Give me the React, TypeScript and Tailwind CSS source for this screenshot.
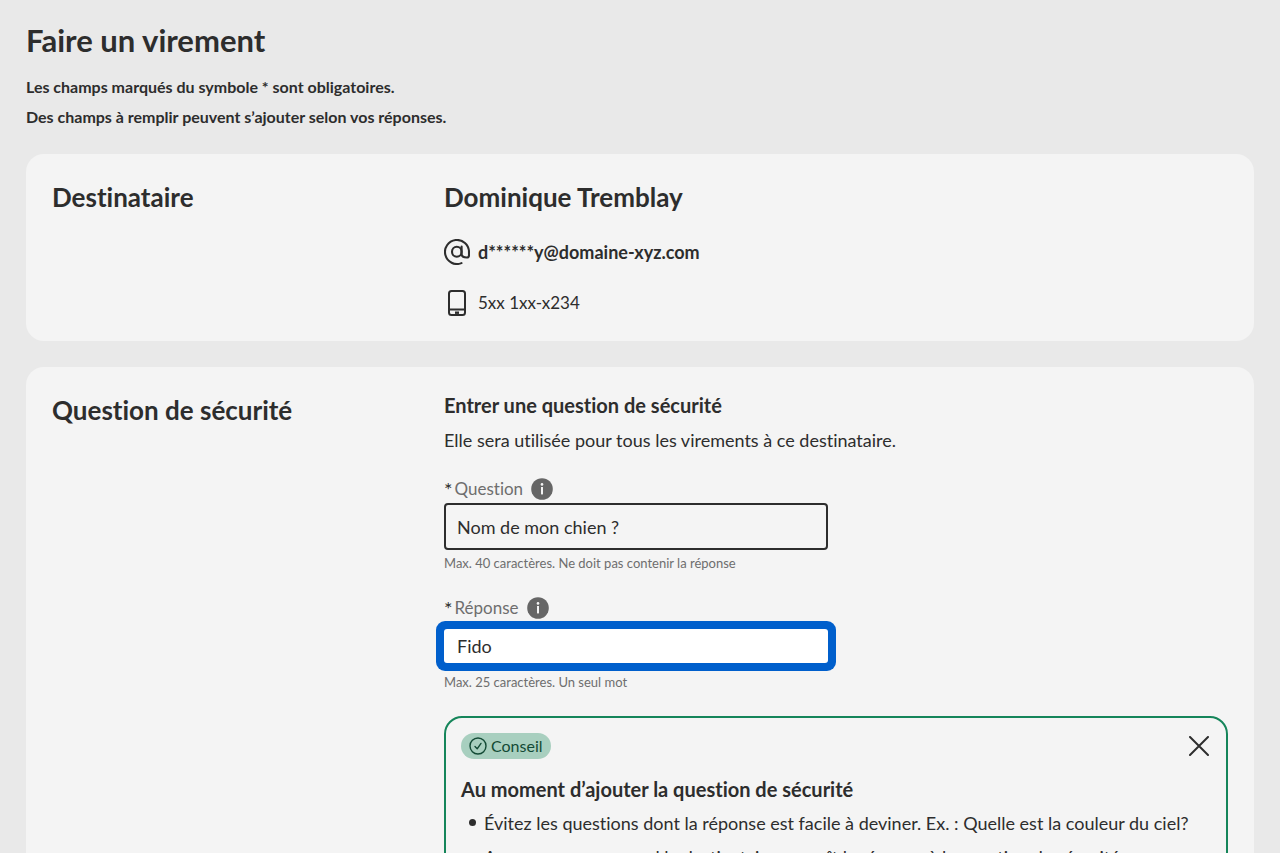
import React, { useState } from 'react';

interface CardSectionProps {
  title: string;
  children: React.ReactNode;
}

interface FieldProps {
  id: string;
  label: string;
  hint: string;
  value: string;
  active?: boolean;
  onChange: (value: string) => void;
}

const TIPS = [
  'Évitez les questions dont la réponse est facile à deviner. Ex. : Quelle est la couleur du ciel?',
  'Assurez-vous que seul le destinataire connaît la réponse à la question de sécurité.',
];

const AtIcon = () => (
  <svg className="h-[26px] w-[26px] shrink-0" viewBox="0 0 26 26" fill="none" stroke="currentColor" strokeWidth="2.1" strokeLinecap="round" aria-hidden="true">
    <path d="M17.5 24.1A12 12 0 1 1 25 13v3.2c0 1.4-.9 2.3-2.2 2.3-2.8 0-5.2-.8-5.2-3.600V7.600" />
    <ellipse cx="12.800" cy="12.800" rx="4.800" ry="5" />
  </svg>
);

const PhoneIcon = () => (
  <svg className="h-[26px] w-[26px] shrink-0" viewBox="0 0 26 26" fill="none" stroke="currentColor" strokeWidth="2" aria-hidden="true">
    <rect x="5" y="1" width="16" height="24" rx="2.5" />
    <path d="M5 19.5h16" />
    <path d="M11 22.7h4" strokeWidth="2.4" />
  </svg>
);

const InfoIcon = () => (
  <svg className="h-[22px] w-[22px]" viewBox="0 0 22 22" aria-hidden="true">
    <circle cx="11" cy="11" r="10.8" fill="#666666" />
    <circle cx="11" cy="6.4" r="1.3" fill="#f4f4f4" />
    <rect x="10" y="9" width="2" height="7.4" fill="#f4f4f4" />
  </svg>
);

const CheckIcon = () => (
  <svg className="h-[18px] w-[18px]" viewBox="0 0 18 18" fill="none" stroke="currentColor" strokeWidth="1.4" strokeLinecap="round" strokeLinejoin="round" aria-hidden="true">
    <circle cx="9" cy="9" r="8" />
    <path d="M6 9.6l2.2 2.2L12 6.4" />
  </svg>
);

const CloseIcon = () => (
  <svg className="h-5 w-5" viewBox="0 0 20 20" fill="none" stroke="currentColor" strokeWidth="2" strokeLinecap="round" aria-hidden="true">
    <path d="M1 1l18 18M19 1L1 19" />
  </svg>
);

const CardSection: React.FC<CardSectionProps> = ({ title, children }) => (
  <section className="grid grid-cols-3 rounded-[18px] bg-[#f4f4f4] px-[26px] pt-6 pb-[25px]">
    <h2 className="text-[26px] leading-[38px] font-bold">{title}</h2>
    <div className="col-span-2">{children}</div>
  </section>
);

const Field: React.FC<FieldProps> = ({ id, label, hint, value, active, onChange }) => (
  <div>
    <div className="flex h-7 items-center">
      <label htmlFor={id} className="flex items-center text-[17px] leading-7 text-[#6e6e6e]">
        <span className="mr-0.5 text-[20px] text-[#2d2d2d]">*</span>
        {label}
      </label>
      <button type="button" aria-label={`Information : ${label}`} className="ml-2">
        <InfoIcon />
      </button>
    </div>
    <input
      id={id}
      type="text"
      value={value}
      onChange={(e) => onChange(e.target.value)}
      aria-describedby={`${id}-hint`}
      className={`block w-96 max-w-full text-[18px] outline-none ${
        active
          ? 'mt-[7px] mb-1.5 h-[34px] rounded-[3px] bg-white px-[13px] ring-8 ring-[#005fcc]'
          : 'h-[47px] rounded border-2 border-[#2d2d2d] bg-transparent px-[11px]'
      }`}
    />
    <p id={`${id}-hint`} className="pt-[3px] text-[13px] leading-5 text-[#6e6e6e]">
      {hint}
    </p>
  </div>
);

export default function App() {
  const [question, setQuestion] = useState('Nom de mon chien ?');
  const [answer, setAnswer] = useState('Fido');
  const [showTip, setShowTip] = useState(true);

  return (
    <main className="min-h-screen bg-[#e9e9e9] px-[26px] pt-[19px] pb-[26px] font-[Lato,sans-serif] text-[#2d2d2d] [font-variant-ligatures:none]">
      <h1 className="text-[31px] leading-[42px] font-bold">Faire un virement</h1>
      <div className="mt-[11px] mb-[22px] text-[16px] leading-[30px] font-bold">
        <p>Les champs marqués du symbole * sont obligatoires.</p>
        <p>Des champs à remplir peuvent s’ajouter selon vos réponses.</p>
      </div>

      <div className="space-y-[26px]">
        <CardSection title="Destinataire">
          <h3 className="text-[26px] leading-[38px] font-bold">Dominique Tremblay</h3>
          <div className="mt-[23px] flex items-center gap-2 text-[18px] leading-[26px] font-bold">
            <AtIcon />
            <span>d******y@domaine-xyz.com</span>
          </div>
          <div className="mt-[25px] flex items-center gap-2 text-[17px] leading-[26px]">
            <PhoneIcon />
            <span>5xx 1xx-x234</span>
          </div>
        </CardSection>

        <CardSection title="Question de sécurité">
          <h3 className="text-[20px] leading-7 font-bold">Entrer une question de sécurité</h3>
          <p className="mt-[7px] text-[18px] leading-7">Elle sera utilisée pour tous les virements à ce destinataire.</p>

          <div className="mt-[21px] space-y-[21px]">
            <Field
              id="question"
              label="Question"
              hint="Max. 40 caractères. Ne doit pas contenir la réponse"
              value={question}
              onChange={setQuestion}
            />
            <Field
              id="reponse"
              label="Réponse"
              hint="Max. 25 caractères. Un seul mot"
              value={answer}
              active
              onChange={setAnswer}
            />
          </div>

          {showTip && (
            <aside className="mt-6 rounded-[18px] border-2 border-[#15855a] px-[15px] py-[15px]">
              <div className="flex items-center justify-between">
                <span className="flex h-[26px] items-center gap-1 rounded-full bg-[#a8cfbf] px-2 text-[16px] text-[#134a35]">
                  <CheckIcon />
                  Conseil
                </span>
                <button type="button" aria-label="Fermer" className="mr-0.5" onClick={() => setShowTip(false)}>
                  <CloseIcon />
                </button>
              </div>
              <h4 className="mt-4 text-[20px] leading-7 font-bold">Au moment d’ajouter la question de sécurité</h4>
              <ul className="mt-[7px] space-y-2 pl-2 text-[18px] leading-[26px]">
                {TIPS.map((tip) => (
                  <li key={tip} className="flex gap-2">
                    <span className="mt-[9px] h-[7px] w-[7px] shrink-0 rounded-full bg-[#2d2d2d]" />
                    <span>{tip}</span>
                  </li>
                ))}
              </ul>
            </aside>
          )}
        </CardSection>
      </div>
    </main>
  );
}
